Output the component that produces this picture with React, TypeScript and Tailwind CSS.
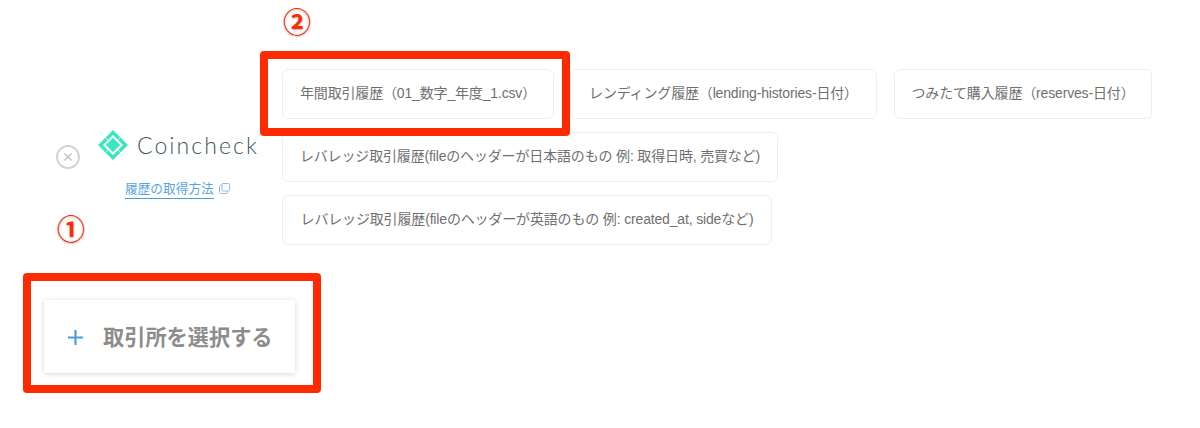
const chips = [
  [
    { label: "年間取引履歴（01_数字_年度_1.csv）", width: "w-[272px]" },
    { label: "レンディング履歴（lending-histories-日付）", width: "w-[307px] mr-px" },
    { label: "つみたて購入履歴（reserves-日付）", width: "w-[258px]" },
  ],
  [{ label: "レバレッジ取引履歴(fileのヘッダーが日本語のもの 例: 取得日時, 売買など)", width: "w-[496px]" }],
  [{ label: "レバレッジ取引履歴(fileのヘッダーが英語のもの 例: created_at, sideなど)", width: "w-[490px]" }],
];

function CoincheckMark() {
  return (
    <svg width="30" height="30" viewBox="0 0 30 30">
      <path
        fill="#3ee6c0"
        fillRule="evenodd"
        d="M15 0 L30 15 L15 30 L0 15 Z M15 5 L5 15 L15 25 L25 15 Z"
      />
      <path d="M15 7.8 L22.2 15 L15 22.2 L7.8 15 Z" fill="#3ee6c0" />
      <path d="M6.5 6.5 L10 10 M23.5 6.5 L20 10 M6.5 23.5 L10 20 M23.5 23.5 L20 20" stroke="#fff" strokeWidth="0.7" />
    </svg>
  );
}

function Marker({ n, className }: { n: string; className: string }) {
  return (
    <span
      className={`absolute text-[28px] leading-none font-bold text-[#ff2a00] [text-shadow:0_1px_2px_rgba(0,0,0,0.3)] ${className}`}
    >
      {n}
    </span>
  );
}

export default function App() {
  return (
    <div
      className="relative h-[428px] w-[1200px] overflow-hidden bg-white pt-[69px]"
      style={{ fontFamily: '"Liberation Sans", "Noto Sans CJK JP", sans-serif' }}
    >
      <div className="flex items-start">
        <div className="mt-[61px] flex w-[282px] shrink-0 pl-[56px]">
          <div className="mt-[15px] flex h-6 w-6 items-center justify-center rounded-full border-2 border-[#d4d4d4]">
            <svg width="10" height="10" viewBox="0 0 10 10" stroke="#c4c4c4" strokeWidth="1.6">
              <path d="M1.5 1.5 L8.5 8.5 M8.5 1.5 L1.5 8.5" />
            </svg>
          </div>
          <div className="ml-[18px] flex flex-col">
            <div className="flex items-center gap-[9px]">
              <CoincheckMark />
              <span
                className="text-[23px] leading-none tracking-[2.1px] whitespace-nowrap text-[#3d5a60]"
                style={{ fontFamily: "Lato, sans-serif", fontWeight: 300 }}
              >
                Coincheck
              </span>
            </div>
            <div className="mt-[21px] ml-[27px] flex items-center gap-[5px]">
              <span className="border-b border-[#4a9ede] pb-px text-[12.7px] leading-[16px] whitespace-nowrap text-[#5aa5e0]">
                履歴の取得方法
              </span>
              <svg width="11" height="11" viewBox="0 0 11 11" fill="none" stroke="#8fbfe6" strokeWidth="1" className="mb-[3px]">
                <rect x="3" y="0.5" width="7.5" height="7.5" rx="1" />
                <path d="M3 2.5 H1.5 a1 1 0 0 0 -1 1 V9.5 a1 1 0 0 0 1 1 H7.5 a1 1 0 0 0 1 -1 V8" />
              </svg>
            </div>
          </div>
        </div>
        <div className="flex flex-col gap-[13px]">
          {chips.map((row, i) => (
            <div key={i} className="flex gap-4">
              {row.map((chip) => (
                <div
                  key={chip.label}
                  className={`flex h-[50px] items-center justify-center rounded-md border border-[#eeeeee] bg-white pb-[2px] text-sm tracking-[-0.16px] whitespace-nowrap text-[#707070] ${chip.width}`}
                >
                  {chip.label}
                </div>
              ))}
            </div>
          ))}
        </div>
      </div>

      <button className="mt-[55px] ml-[44px] flex h-[73px] w-[251px] items-center bg-white pt-[2px] pl-[23px] shadow-[0_1px_5px_rgba(0,0,0,0.16)]">
        <svg width="17" height="17" viewBox="0 0 17 17" stroke="#4a9ede" strokeWidth="2.2">
          <path d="M8.5 1 V16 M1 8.5 H16" />
        </svg>
        <span className="ml-[19px] text-[21.2px] font-bold text-[#8c8c8c]">取引所を選択する</span>
      </button>

      <div className="absolute top-[51px] left-[260px] h-[85px] w-[310px] rounded-[4px] border-[8px] border-[#ff2a00]" />
      <div className="absolute top-[273px] left-[23px] h-[120px] w-[298px] rounded-[4px] border-[8px] border-[#ff2a00]" />
      <Marker n="①" className="top-[217px] left-[57px]" />
      <Marker n="②" className="top-[10px] left-[283px]" />
    </div>
  );
}
